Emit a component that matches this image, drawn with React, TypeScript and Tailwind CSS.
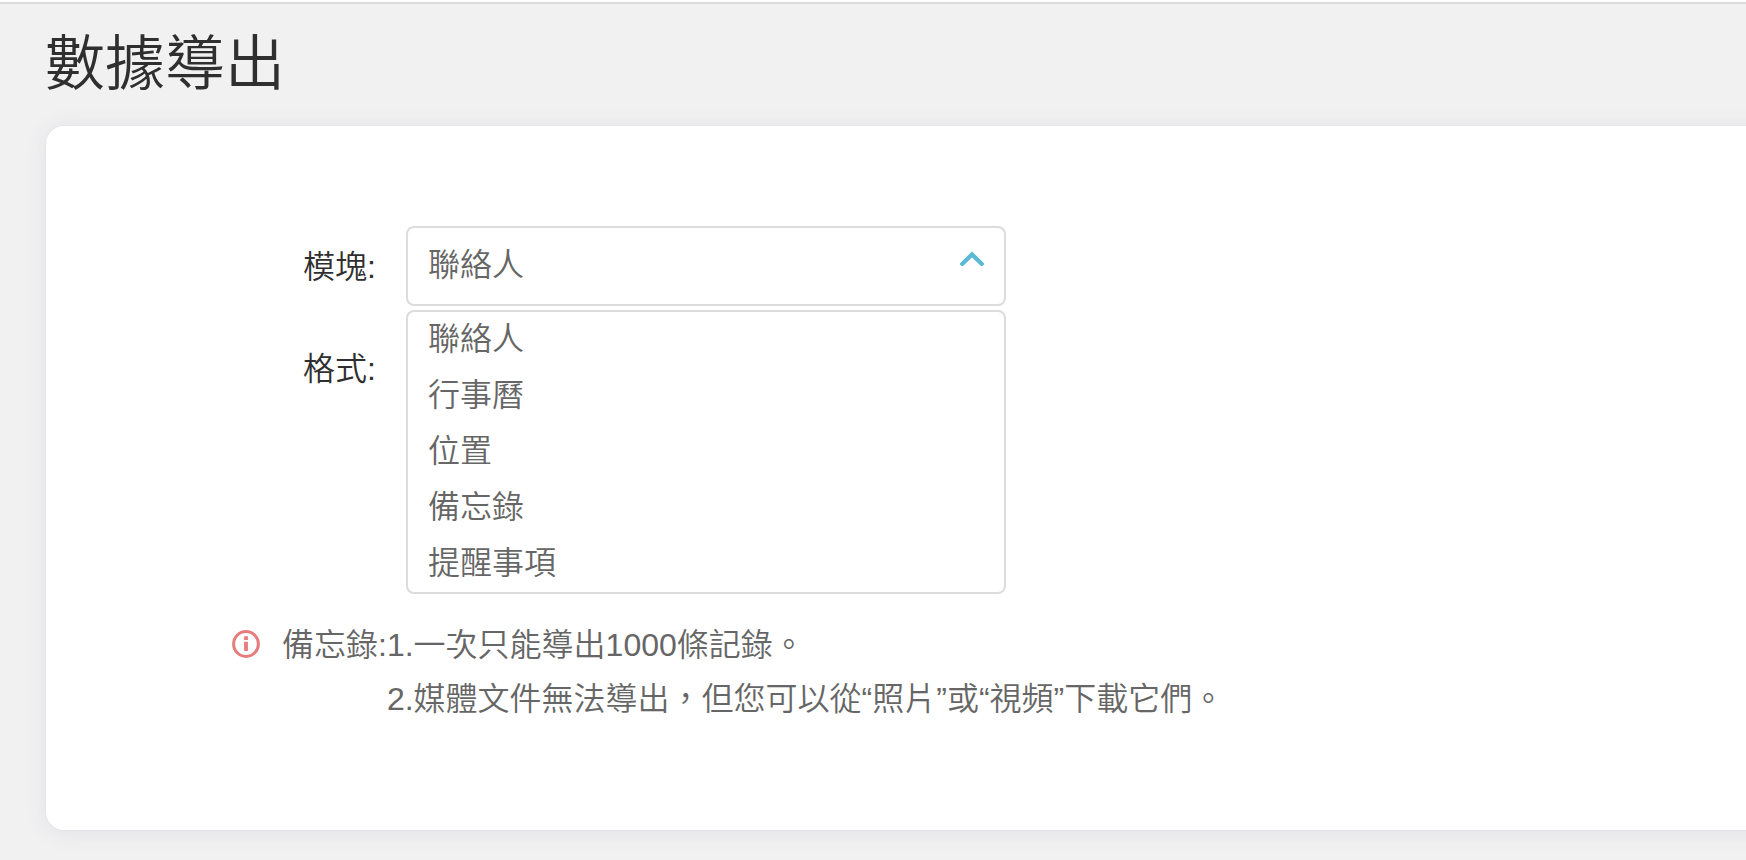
import { useState } from 'react';

const modules = ['聯絡人', '行事曆', '位置', '備忘錄', '提醒事項'];

const fieldBox = 'w-full rounded-lg border-2 border-[#dcdcdc] bg-white';

function ModuleSelect() {
  const [value, setValue] = useState(modules[0]);
  const [open, setOpen] = useState(true);

  const pick = (name: string) => {
    setValue(name);
    setOpen(false);
  };

  return (
    <div className="relative w-[600px]">
      <select
        id="module"
        value={value}
        onChange={(e) => setValue(e.target.value)}
        onMouseDown={(e) => {
          e.preventDefault();
          setOpen(!open);
        }}
        className={`${fieldBox} block h-20 appearance-none px-5 pb-0.5 text-[#666] outline-none`}
      >
        {modules.map((name) => (
          <option key={name}>{name}</option>
        ))}
      </select>
      <svg
        viewBox="0 0 24 16"
        className={`pointer-events-none absolute top-6 right-[22px] h-4 w-6 ${open ? '' : 'rotate-180'}`}
        fill="none"
        stroke="#5cb9d6"
        strokeWidth="4.2"
        strokeLinecap="round"
        strokeLinejoin="miter"
      >
        <path d="M2.2 13.9 12 4.4l9.8 9.5" />
      </svg>

      {/* Options, drawn over the rows below */}
      {open && (
        <ul className={`${fieldBox} absolute top-full left-0 z-10 mt-1`}>
          {modules.map((name) => (
            <li key={name}>
              <button
                type="button"
                onClick={() => pick(name)}
                className="block h-14 w-full px-5 pb-0.5 text-left text-[#666] hover:bg-gray-50"
              >
                {name}
              </button>
            </li>
          ))}
        </ul>
      )}
    </div>
  );
}

export default function App() {
  return (
    <div
      lang="zh-TW"
      className="min-h-screen overflow-hidden bg-[#f1f1f1] pb-[30px] font-['Liberation_Sans','Noto_Sans_CJK_TC',sans-serif] text-[32px] leading-[54px] font-[350] text-[#2f2f2f]"
    >
      <div className="h-1 border-b-2 border-[#dcdcdc] bg-white" />
      <h1 className="mt-[31px] ml-[45px] text-[60px] leading-[60px] font-[350]">數據導出</h1>

      {/* Card runs off the right edge of the window */}
      <main className="mt-[31px] -mr-10 ml-[46px] rounded-[18px] bg-white pt-[100px] pb-[104px] shadow-[0_0_2px_rgba(80,80,110,0.1),0_2px_24px_rgba(80,80,160,0.09)]">
        <form className="flex flex-col gap-[22px]">
          <div className="flex items-center gap-[30px]">
            <label htmlFor="module" className="w-[330px] pt-0.5 text-right">
              模塊:
            </label>
            <ModuleSelect />
          </div>
          <div className="flex items-center gap-[30px]">
            <label htmlFor="format" className="w-[330px] pt-0.5 text-right">
              格式:
            </label>
            <div className="w-[600px]">
              <select id="format" className={`${fieldBox} block h-20 appearance-none px-5`} />
            </div>
          </div>
        </form>

        {/* Export limits */}
        <div className="mt-[210px] flex pl-[186px] text-[#666]">
          <svg viewBox="0 0 28 28" className="mt-3 mr-[22px] h-7 w-7 shrink-0" fill="none" stroke="#e87b7d">
            <circle cx="14" cy="14" r="12.4" strokeWidth="3" />
            <path d="M14 6.3v3.6M14 11.7v9.2" strokeWidth="3.8" />
          </svg>
          <span>備忘錄:</span>
          <ol>
            <li>1.一次只能導出1000條記錄。</li>
            <li>2.媒體文件無法導出，但您可以從“照片”或“視頻”下載它們。</li>
          </ol>
        </div>
      </main>
    </div>
  );
}
